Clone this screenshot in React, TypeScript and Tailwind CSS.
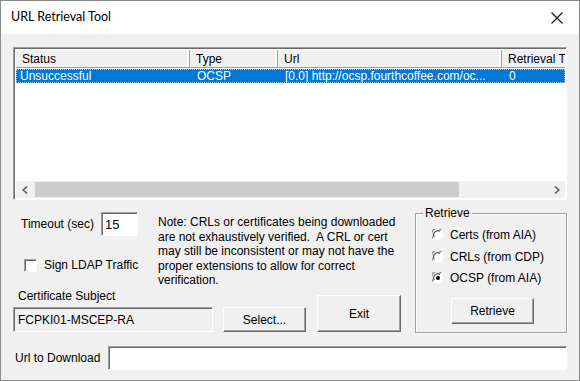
import React from 'react';

const font = { fontFamily: '"Liberation Sans", Arial, sans-serif' };

// Classic raised 3D button
function Button({ label, className = '' }: { label: string; className?: string }) {
  return (
    <div
      className={`flex items-center justify-center border border-t-white border-l-white border-b-[#696969] border-r-[#696969] bg-[#f0f0f0] shadow-[inset_-1px_-1px_0_#a0a0a0] text-[12px] text-black ${className}`}
    >
      {label}
    </div>
  );
}

// Sunken edit box
function Field({ value = '', className = '', gray = false }: { value?: string; className?: string; gray?: boolean }) {
  return (
    <div
      className={`flex items-center border border-t-[#a0a0a0] border-l-[#a0a0a0] border-b-white border-r-white shadow-[inset_1px_1px_0_#696969] pl-[3px] text-[12px] text-black ${gray ? 'bg-[#f0f0f0]' : 'bg-white'} ${className}`}
    >
      {value}
    </div>
  );
}

function Radio({ checked = false }: { checked?: boolean }) {
  return (
    <svg width="12" height="12" viewBox="0 0 12 12">
      <circle cx="6" cy="6" r="5.5" fill="#fff" />
      <path d="M1.1 9.2 A5.4 5.4 0 0 1 9.2 1.1" stroke="#8a8a8a" strokeWidth="1.3" fill="none" />
      <path d="M2.3 8.2 A4.3 4.3 0 0 1 8.2 2.3" stroke="#505050" strokeWidth="1.2" fill="none" />
      {checked && <circle cx="6" cy="6" r="2" fill="#000" />}
    </svg>
  );
}

function HeaderCell({ label, className = '' }: { label: string; className?: string }) {
  return (
    <div
      className={`h-full flex items-center pl-[6px] border-r border-r-[#a0a0a0] shadow-[inset_-2px_0_0_#fff] overflow-hidden whitespace-nowrap ${className}`}
    >
      {label}
    </div>
  );
}

export default function App() {
  return (
    <div
      className="w-[580px] h-[381px] border border-[#8a8a8a] bg-[#f0f0f0] flex flex-col overflow-hidden text-black"
      style={font}
    >
      {/* Title bar */}
      <div className="h-[33px] bg-white flex items-center justify-between pl-[10px] pr-[16px] shrink-0">
        <span className="text-[12.5px] text-black" style={{ fontFamily: 'Lato, "Noto Sans", sans-serif' }}>
          URL Retrieval Tool
        </span>
        <svg width="12" height="12" viewBox="0 0 12 12">
          <path d="M0.5 0.5 L11.5 11.5 M11.5 0.5 L0.5 11.5" stroke="#111" strokeWidth="1.1" />
        </svg>
      </div>

      <div className="w-[578px] flex flex-col px-[12px] pt-[13px]">
        {/* List view */}
        <div className="w-[554px] h-[153px] border border-t-[#a0a0a0] border-l-[#a0a0a0] border-b-white border-r-white shadow-[inset_1px_1px_0_#696969] bg-white flex flex-col p-[1px] pl-[2px] pt-[2px] text-[12px]">
          <div className="h-[18px] flex bg-[#f0f0f0] border-b border-b-[#a0a0a0] shrink-0">
            <HeaderCell label="Status" className="w-[174px]" />
            <HeaderCell label="Type" className="w-[88px]" />
            <HeaderCell label="Url" className="w-[224px]" />
            <HeaderCell label="Retrieval T" className="flex-1 border-r-0 shadow-none" />
          </div>
          <div className="h-[14px] mt-[1px] flex bg-[#0078d7] text-white border border-dotted border-[#9cc8ee] whitespace-nowrap overflow-hidden">
            <div className="w-[174px] pl-[3px] leading-[12px]">Unsuccessful</div>
            <div className="w-[88px] pl-[6px] leading-[12px]">OCSP</div>
            <div className="w-[224px] pl-[6px] leading-[12px]">[0.0] http://ocsp.fourthcoffee.com/oc...</div>
            <div className="flex-1 pl-[6px] leading-[12px]">0</div>
          </div>
          <div className="flex-1" />
          {/* Horizontal scrollbar */}
          <div className="h-[17px] flex bg-[#f0f0f0] shrink-0">
            <div className="w-[17px] flex items-center justify-center">
              <svg width="6" height="8" viewBox="0 0 6 8">
                <path d="M5 0.5 L1.2 4 L5 7.5" stroke="#606060" strokeWidth="1.6" fill="none" />
              </svg>
            </div>
            <div className="flex-1 py-[1px] flex">
              <div className="w-[424px] ml-[2px] bg-[#cdcdcd]" />
            </div>
            <div className="w-[17px] flex items-center justify-center">
              <svg width="6" height="8" viewBox="0 0 6 8">
                <path d="M1 0.5 L4.8 4 L1 7.5" stroke="#606060" strokeWidth="1.6" fill="none" />
              </svg>
            </div>
          </div>
        </div>

        {/* Lower controls */}
        <div className="flex mt-[12px] text-[12px]">
          <div className="w-[392px] flex flex-col">
            <div className="flex h-[77px]">
              <div className="w-[145px] flex flex-col">
                <div className="flex items-center pl-[8px]">
                  <span>Timeout (sec)</span>
                  <Field value="15" className="ml-[7px] w-[37px] h-[24px] items-start pt-[2px] text-[13px]" />
                </div>
                <div className="flex items-center pl-[11px] mt-[20px]">
                  <div className="w-[13px] h-[13px] bg-white border border-t-[#a0a0a0] border-l-[#a0a0a0] border-b-white border-r-white shadow-[inset_1px_1px_0_#696969]" />
                  <span className="ml-[7px]">Sign LDAP Traffic</span>
                </div>
              </div>
              <div className="flex-1 pt-[3px] leading-[14.5px]">
                Note: CRLs or certificates being downloaded are not exhaustively verified.&nbsp; A CRL or cert may still be inconsistent or may not have the proper extensions to allow for correct verification.
              </div>
            </div>
            <div className="flex items-end">
              <div className="flex flex-col">
                <span className="pl-[5px] leading-[14px]">Certificate Subject</span>
                <Field value="FCPKI01-MSCEP-RA" gray className="mt-[4px] w-[200px] h-[25px] pl-[4px]" />
              </div>
              <Button label="Select..." className="ml-[10px] w-[83px] h-[25px]" />
              <Button label="Exit" className="ml-[11px] w-[84px] h-[37px]" />
            </div>
          </div>

          {/* Retrieve group */}
          <div className="ml-[10px] w-[152px] h-[120px] mt-[1px] relative border border-[#a0a0a0] shadow-[inset_1px_1px_0_#fff,1px_1px_0_#fff] flex flex-col pl-[16px] leading-[14px]">
            <span className="absolute -top-[8px] left-[7px] px-[2px] bg-[#f0f0f0] leading-[14px]">Retrieve</span>
            <div className="flex items-center mt-[14px] gap-[6px] h-[14px]">
              <Radio />
              <span>Certs (from AIA)</span>
            </div>
            <div className="flex items-center mt-[8px] gap-[6px] h-[14px]">
              <Radio />
              <span>CRLs (from CDP)</span>
            </div>
            <div className="flex items-center mt-[7px] gap-[6px] h-[14px]">
              <Radio checked />
              <span>OCSP (from AIA)</span>
            </div>
            <Button label="Retrieve" className="mt-[13px] ml-[19px] w-[83px] h-[26px]" />
          </div>
        </div>

        {/* Url to download */}
        <div className="flex items-center mt-[13px] text-[12px]">
          <span className="pl-[2px] w-[95px]">Url to Download</span>
          <Field className="w-[459px] h-[24px] shadow-[inset_1px_1px_0_#696969,1px_0_0_#f0f0f0]" />
        </div>
      </div>
    </div>
  );
}
